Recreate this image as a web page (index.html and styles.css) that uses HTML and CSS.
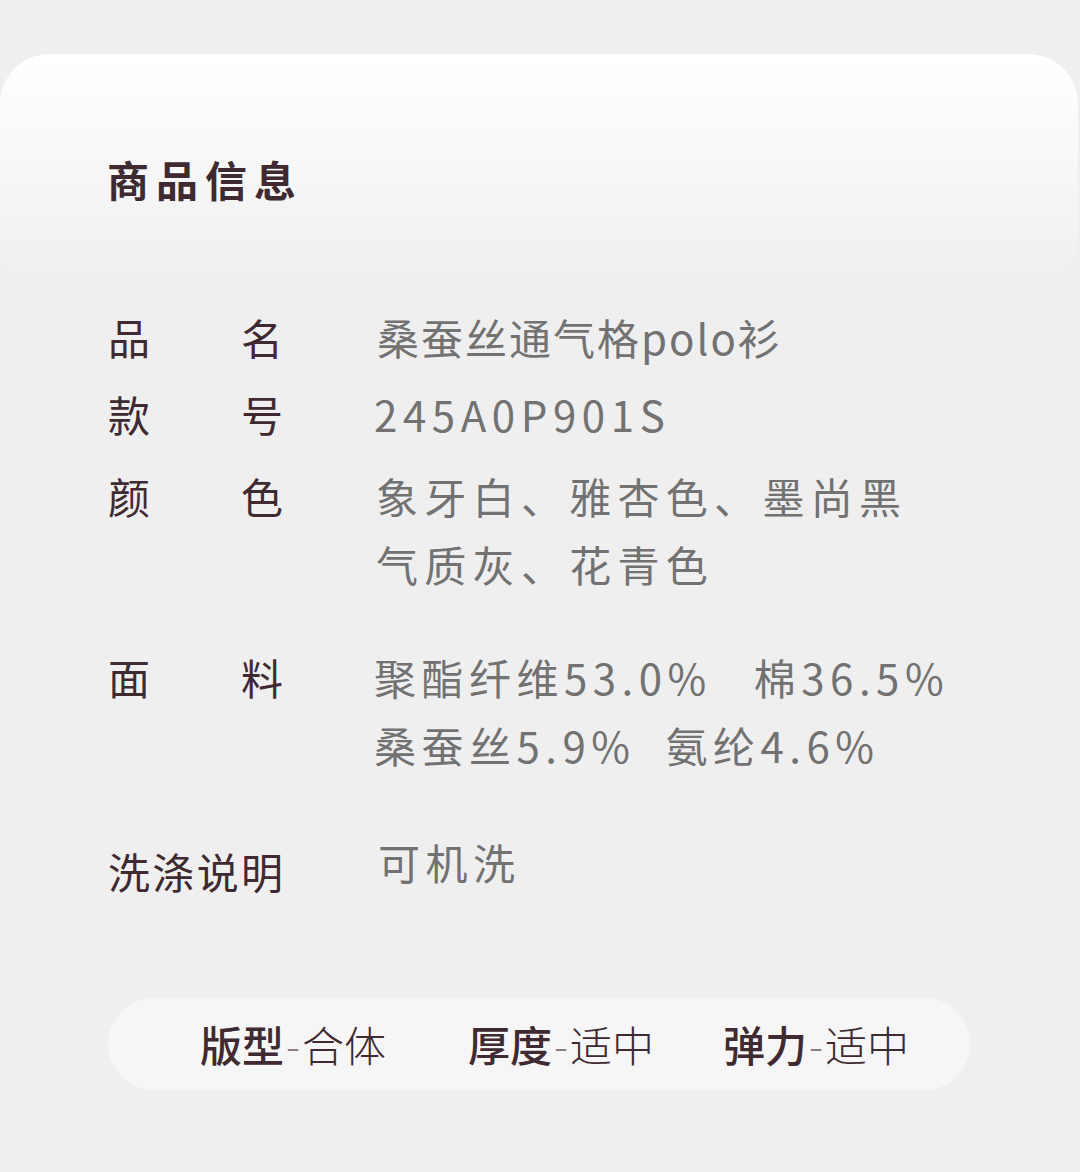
FILE: index.html
```html
<!DOCTYPE html>
<html lang="zh-CN">
<head>
    <meta charset="UTF-8">
    <meta name="viewport" content="width=device-width, initial-scale=1.0">
    <title>商品信息</title>
    <link rel="stylesheet" href="styles.css">
</head>
<body>
    <div class="header-card">
        <h1 class="title">商品信息</h1>
    </div>

    <div class="info">
        <div class="label">品名</div>
        <div class="value name">桑蚕丝通气格polo衫</div>

        <div class="label row-code">款号</div>
        <div class="value code row-code">245A0P901S</div>

        <div class="label row-color">颜色</div>
        <div class="value wide row-color">象牙白、雅杏色、墨尚黑<br>气质灰、花青色</div>

        <div class="label row-fabric">面料</div>
        <div class="value wide row-fabric">
            <span class="part-1">聚酯纤维53.0%</span><span>棉36.5%</span><br>
            <span class="part-2">桑蚕丝5.9%</span><span>氨纶4.6%</span>
        </div>

        <div class="label row-wash wash-label">洗涤说明</div>
        <div class="value wide row-wash">可机洗</div>
    </div>

    <div class="specs">
        <div class="spec"><b>版型</b><span class="dash">-</span>合体</div>
        <div class="spec spec-mid"><b>厚度</b><span class="dash">-</span>适中</div>
        <div class="spec"><b>弹力</b><span class="dash">-</span>适中</div>
    </div>
</body>
</html>
```

FILE: styles.css
```css
body {
    margin: 0;
    padding: 0;
    background-color: #efefef;
    font-family: "Noto Sans CJK SC", "Noto Sans", sans-serif;
    color: #3e2a30;
}

/* Top card with the white fade */
.header-card {
    margin: 54px 2px 0 0;
    height: 236px;
    border-radius: 50px;
    background: linear-gradient(#ffffff 0%, #f8f8f8 45%, #eeeeee 100%);
    padding-left: 107px;
    box-sizing: border-box;
}

.title {
    margin: 0;
    padding-top: 95px;
    font-size: 42px;
    line-height: 60px;
    font-weight: bold;
    letter-spacing: 7px;
}

/* Info table */
.info {
    display: grid;
    grid-template-columns: 175px 1fr;
    column-gap: 93px;
    margin: 13px 0 0 108px;
}

.label {
    font-size: 42px;
    line-height: 68px;
    text-align: justify;
    text-align-last: justify;
    color: #3e2a30;
}

.value {
    font-size: 42px;
    line-height: 68px;
    font-weight: 400;
    color: #727272;
}

.name {
    letter-spacing: 2px;
    margin-left: 1px;
}

.code {
    letter-spacing: 5.6px;
    margin-left: -2px;
}

.wide {
    letter-spacing: 6.3px;
}

.row-code {
    margin-top: 9px;
}

.row-color {
    margin-top: 14px;
}

.row-fabric {
    margin-top: 45px;
}

.row-fabric.value {
    margin-left: -2px;
    letter-spacing: 5.5px;
}

.part-1 {
    margin-right: 42px;
}

.part-2 {
    margin-right: 30px;
}

.row-wash {
    margin-top: 49px;
}

.wash-label {
    padding-top: 9px;
    letter-spacing: 0;
}

.row-wash.value {
    margin-left: 2px;
    letter-spacing: 5.5px;
}

/* Bottom pill */
.specs {
    display: flex;
    align-items: center;
    margin: 93px 0 0 108px;
    width: 862px;
    height: 92px;
    border-radius: 46px;
    background-color: #f6f6f6;
    padding-left: 92px;
    box-sizing: border-box;
}

.spec {
    font-size: 42px;
    line-height: 50px;
    font-weight: 300;
    color: #3e2a30;
    white-space: nowrap;
}

.spec b {
    font-weight: 500;
}

.spec-mid {
    margin: 0 69px 0 82px;
}

.dash {
    color: #8a7f82;
    margin: 0 2px;
}
```
